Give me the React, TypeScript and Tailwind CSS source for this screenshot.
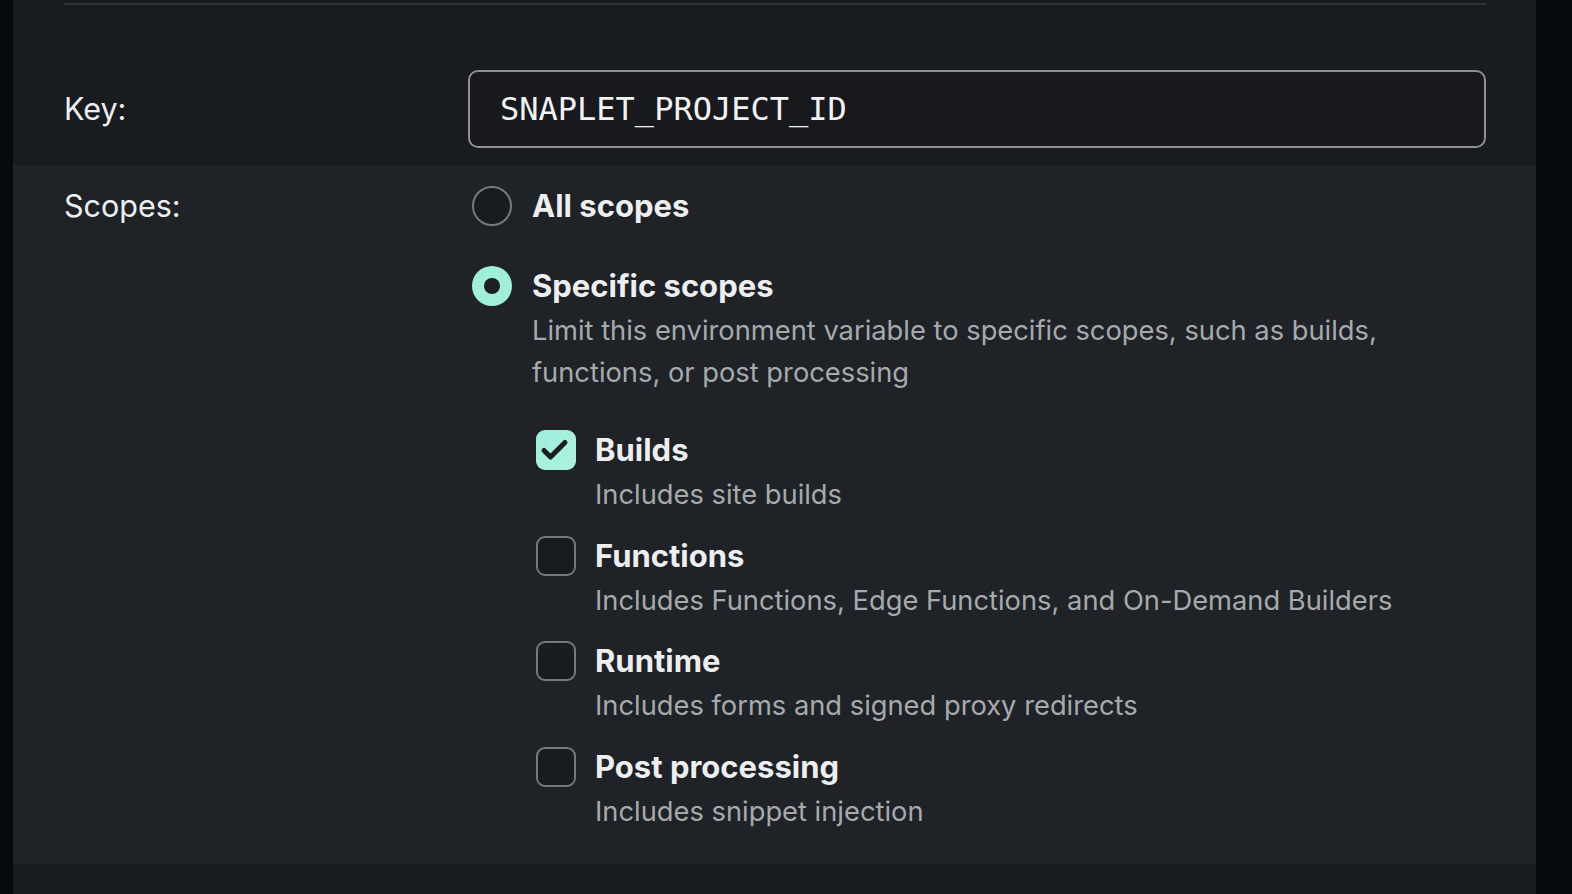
const scopes = [
  { title: "Builds", desc: "Includes site builds", checked: true },
  { title: "Functions", desc: "Includes Functions, Edge Functions, and On-Demand Builders", checked: false },
  { title: "Runtime", desc: "Includes forms and signed proxy redirects", checked: false },
  { title: "Post processing", desc: "Includes snippet injection", checked: false },
];

const Radio = ({ checked }: { checked: boolean }) =>
  checked ? (
    <span className="flex h-[40px] w-[40px] shrink-0 items-center justify-center rounded-full bg-[#a0efdb]">
      <span className="h-[16px] w-[16px] rounded-full bg-[#1c1f23]" />
    </span>
  ) : (
    <span className="h-[40px] w-[40px] shrink-0 rounded-full border-2 border-[#75797e] bg-[#181b1f]" />
  );

const Checkbox = ({ checked }: { checked: boolean }) =>
  checked ? (
    <span className="flex h-[40px] w-[40px] shrink-0 items-center justify-center rounded-[9px] bg-gradient-to-br from-[#9eeedb] to-[#aef2e1]">
      <svg width="40" height="40" viewBox="0 0 40 40" fill="none">
        <path
          d="M8 20.5l6.5 6.5L29 12.5"
          stroke="#1a1d21"
          strokeWidth="5"
          strokeLinecap="round"
          strokeLinejoin="round"
        />
      </svg>
    </span>
  ) : (
    <span className="h-[40px] w-[40px] shrink-0 rounded-[9px] border-2 border-[#75797e] bg-[#181b1f]" />
  );

export default function App() {
  return (
    <div
      className="flex h-[894px] w-full overflow-hidden bg-[#070a0d]"
      style={{ fontFamily: "Inter, 'Noto Sans', sans-serif" }}
    >
      <div className="ml-[13px] flex w-[1523px] flex-col bg-[#181b1f]">
        {/* key */}
        <div className="h-[165px] pl-[51px] pr-[50px] pt-[3px]">
          <div className="h-[2px] bg-[#2d3136]" />
          <div className="mt-[65px] flex items-center">
            <div className="w-[404px] text-[30.5px] text-[#eceef0]">Key:</div>
            <div className="flex h-[78px] flex-1 items-center rounded-[10px] border-2 border-[#8c9095] bg-[#17191d] pl-[30px]">
              <span
                className="text-[32px] text-[#f1f2f3]"
                style={{ fontFamily: "'DejaVu Sans Mono', monospace" }}
              >
                SNAPLET_PROJECT_ID
              </span>
            </div>
          </div>
        </div>

        {/* scopes */}
        <div className="flex h-[699px] bg-[#1f2226] pl-[51px] pt-[21px]">
          <div className="w-[408px] text-[30.5px] leading-[40px] text-[#eceef0]">Scopes:</div>
          <div className="flex flex-col">
            <label className="flex items-center gap-[20px]">
              <Radio checked={false} />
              <span className="text-[31px] font-bold leading-[40px] text-[#eceef0]">All scopes</span>
            </label>
            <div className="mt-[40px]">
              <label className="flex items-center gap-[20px]">
                <Radio checked />
                <span className="text-[31px] font-bold leading-[40px] text-[#eceef0]">Specific scopes</span>
              </label>
              <p className="mt-[3.5px] w-[930px] pl-[60px] text-[27.3px] leading-[42px] text-[#a6aaae]">
                Limit this environment variable to specific scopes, such as builds, functions, or post processing
              </p>
            </div>
            <div className="mt-[36.5px] flex flex-col gap-[19.7px] pl-[64px]">
              {scopes.map((s) => (
                <div key={s.title}>
                  <label className="flex items-center gap-[19px]">
                    <Checkbox checked={s.checked} />
                    <span className="text-[31px] font-bold leading-[40px] text-[#eceef0]">{s.title}</span>
                  </label>
                  <p className="mt-[4px] pl-[59px] text-[27.3px] leading-[42px] text-[#a6aaae]">{s.desc}</p>
                </div>
              ))}
            </div>
          </div>
        </div>
        <div className="flex-1 bg-[#181b1f]" />
      </div>
    </div>
  );
}
